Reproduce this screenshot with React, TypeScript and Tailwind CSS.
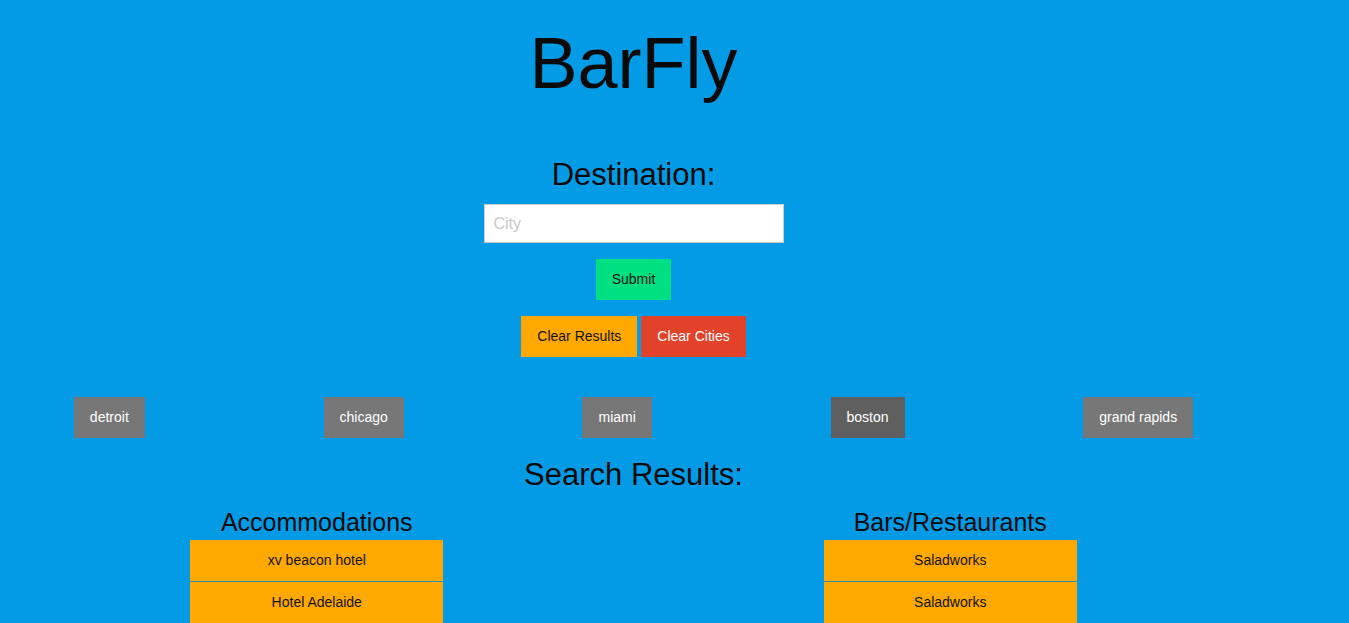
import React from "react";

const cities = ["detroit", "chicago", "miami", "boston", "grand rapids"];

function ResultColumn({ title, items }: { title: string; items: string[] }) {
  return (
    <div className="flex flex-col items-center">
      <h3 className="text-[25px] leading-[28px] text-[#0a0a0a]">{title}</h3>
      <div className="mt-[4px] flex w-[253px] flex-col">
        {items.map((it, i) => (
          <div key={i} className="flex flex-col">
            {i > 0 && <div className="h-px bg-[#3190b9]" />}
            <div className="flex h-[41px] items-center justify-center bg-[#ffa900] text-[14px] text-[#111]">
              {it}
            </div>
          </div>
        ))}
      </div>
    </div>
  );
}

export default function App() {
  return (
    <div
      className="h-[623px] w-full overflow-hidden bg-[#039be5]"
      style={{ fontFamily: '"Liberation Sans", Arial, sans-serif' }}
    >
      <div className="flex w-[1267px] flex-col items-center pt-[23px]">
        <h1 className="h-[80px] text-[72px] leading-[80px] text-[#0a0a0a]">BarFly</h1>
        <h2 className="mt-[54px] text-[31px] leading-[36px] text-[#0a0a0a]">Destination:</h2>
        <input
          placeholder="City"
          className="mt-[11px] h-[39px] w-[300px] border border-[#cccccc] bg-white px-[9px] text-[16px] text-black outline-none placeholder:text-[#c8c8c8]"
        />
        <button className="mt-[16px] flex h-[41px] items-center bg-[#00df82] px-4 text-[14px] text-[#111]">
          Submit
        </button>
        <div className="mt-[16px] flex gap-[4px]">
          <button className="flex h-[41px] items-center bg-[#ffa900] px-4 text-[14px] text-[#111]">
            Clear Results
          </button>
          <button className="flex h-[41px] items-center bg-[#e2412a] px-4 text-[14px] text-white">
            Clear Cities
          </button>
        </div>
        <div className="mt-[40px] flex w-[1298px] justify-around">
          {cities.map((c) => (
            <button
              key={c}
              className={`flex h-[41px] items-center px-4 text-[14px] text-white ${
                c === "boston" ? "bg-[#5f5f5f]" : "bg-[#777777]"
              }`}
            >
              {c}
            </button>
          ))}
        </div>
        <h2 className="mt-[19px] text-[31px] leading-[36px] text-[#0a0a0a]">Search Results:</h2>
        <div className="mt-[15px] grid w-full grid-cols-2">
          <ResultColumn title="Accommodations" items={["xv beacon hotel", "Hotel Adelaide"]} />
          <ResultColumn title="Bars/Restaurants" items={["Saladworks", "Saladworks"]} />
        </div>
      </div>
    </div>
  );
}
